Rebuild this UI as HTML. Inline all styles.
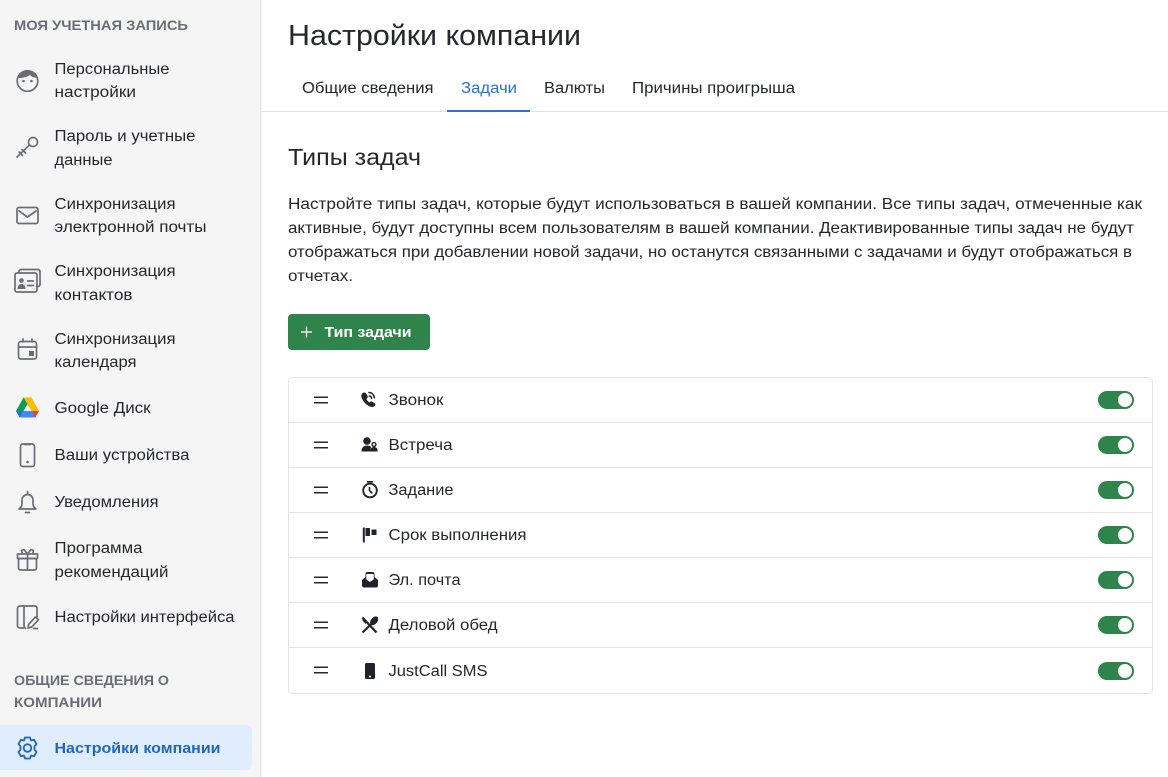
<!DOCTYPE html>
<html lang="ru"><head><meta charset="utf-8"><title>Настройки компании</title>
<style>
html,body{margin:0;padding:0;background:#fff;width:1168px;height:777px;overflow:hidden}
svg{display:block}
text{font-family:"Liberation Sans",sans-serif;fill:#25272c;font-size:15.3px}
.h{font-weight:700;font-size:14.2px;fill:#6a6d75}
.i{fill:none;stroke:#6a6d75;stroke-width:1.7;stroke-linecap:round;stroke-linejoin:round}
.d{fill:#21232c}
</style></head><body>
<svg width="1168" height="777" viewBox="0 0 1168 777" xmlns="http://www.w3.org/2000/svg">
<rect x="0" y="0" width="260" height="777" fill="#f5f5f5"/>
<rect x="260" y="0" width="1.5" height="777" fill="#e6e6e6"/>
<rect x="261" y="111" width="907" height="1" fill="#e0e0e0"/>

<!-- Sidebar text -->
<text class="h" x="14" y="30" textLength="174" lengthAdjust="spacingAndGlyphs">МОЯ УЧЕТНАЯ ЗАПИСЬ</text>
<text x="54.5" y="74" textLength="115" lengthAdjust="spacingAndGlyphs">Персональные</text>
<text x="54.5" y="97" textLength="81.500" lengthAdjust="spacingAndGlyphs">настройки</text>
<text x="54.5" y="141" textLength="141" lengthAdjust="spacingAndGlyphs">Пароль и учетные</text>
<text x="54.5" y="165" textLength="58" lengthAdjust="spacingAndGlyphs">данные</text>
<text x="54.500" y="209" textLength="121" lengthAdjust="spacingAndGlyphs">Синхронизация</text>
<text x="54.500" y="232" textLength="152" lengthAdjust="spacingAndGlyphs">электронной почты</text>
<text x="54.5" y="276" textLength="121" lengthAdjust="spacingAndGlyphs">Синхронизация</text>
<text x="54.5" y="300" textLength="78" lengthAdjust="spacingAndGlyphs">контактов</text>
<text x="54.5" y="344" textLength="121" lengthAdjust="spacingAndGlyphs">Синхронизация</text>
<text x="54.5" y="367" textLength="82" lengthAdjust="spacingAndGlyphs">календаря</text>
<text x="54.5" y="413" textLength="96" lengthAdjust="spacingAndGlyphs">Google Диск</text>
<text x="54.5" y="460" textLength="135" lengthAdjust="spacingAndGlyphs">Ваши устройства</text>
<text x="54.5" y="507" textLength="104" lengthAdjust="spacingAndGlyphs">Уведомления</text>
<text x="54.5" y="553" textLength="88" lengthAdjust="spacingAndGlyphs">Программа</text>
<text x="54.5" y="577" textLength="114" lengthAdjust="spacingAndGlyphs">рекомендаций</text>
<text x="54.5" y="622" textLength="180" lengthAdjust="spacingAndGlyphs">Настройки интерфейса</text>
<text class="h" x="14" y="685" textLength="155" lengthAdjust="spacingAndGlyphs">ОБЩИЕ СВЕДЕНИЯ О</text>
<text class="h" x="14" y="707" textLength="88" lengthAdjust="spacingAndGlyphs">КОМПАНИИ</text>
<path d="M0 725H246a6 6 0 0 1 6 6V764a6 6 0 0 1-6 6H0Z" fill="#e0edff"/>
<text x="54.5" y="753" textLength="166" lengthAdjust="spacingAndGlyphs" style="font-weight:700;fill:#1f66c1;font-size:15.2px">Настройки компании</text>

<!-- Sidebar icons -->
<circle class="i" cx="27.500" cy="81" r="10.300"/>
<path d="M17.800 78C18.500 73.500 22 70.500 27.500 70.500S36.500 73.500 37.200 78C33.500 77.500 31.500 76.500 29.800 75C27.500 77 22.500 78 17.800 78Z" fill="#6a6d75"/>
<circle cx="23.500" cy="81" r="1.300" fill="#6a6d75"/><circle cx="31.500" cy="81" r="1.300" fill="#6a6d75"/>
<path class="i" d="M29.500 145 17 157M19 152l3.500 3.500M22 149.500l3.500 3.500"/><circle class="i" cx="33" cy="142" r="4.500"/>
<rect class="i" x="17" y="207.500" width="21" height="16" rx="2"/><path class="i" d="M19 211l8.500 6 8.500-6"/>
<path class="i" d="M19 272v-.500a2 2 0 0 1 2-2h17a2 2 0 0 1 2 2v13a2 2 0 0 1-2 2h-1.500"/>
<rect class="i" x="15" y="273" width="22" height="19" rx="2"/>
<circle cx="21.500" cy="280.500" r="2.300" fill="#6a6d75"/><path d="M17.500 289c0-3.500 2-5 4-5s4 1.500 4 5Z" fill="#6a6d75"/>
<path class="i" d="M27.500 281h6M27.500 285.500h6"/>
<rect class="i" x="18.500" y="341.500" width="18" height="17.500" rx="2.500"/><path class="i" d="M18.500 347h18M23 339v3M32 339v3"/><rect x="29" y="351" width="5" height="5" fill="#6a6d75"/>
<!-- Drive -->
<path d="M23.500 397.500H31.500L39 411H31.500Z" fill="#fbbc04"/>
<path d="M23.500 397.500 16 411l3.800 6.500L27.500 404Z" fill="#0f9d58"/>
<path d="M23.500 411H39l-3.800 6.500H19.800Z" fill="#4285f4"/>
<path d="M32.500 411H39l-3.800 6.500Z" fill="#ea4335"/>
<path d="M16 411h7l-3.200 6.500Z" fill="#1a73e8"/>
<rect class="i" x="20.500" y="444" width="14" height="22.500" rx="2.500"/><path class="i" d="M25 444.500h5"/><circle cx="27.500" cy="462" r="1.300" fill="#6a6d75"/>
<path class="i" d="M19 509c2-1.500 3-3 3-5.500V500a5.500 5.500 0 0 1 11 0v3.500c0 2.500 1 4 3 5.500ZM27.500 491.500v3M25.500 512.500h4"/>
<rect class="i" x="18.500" y="558.500" width="18" height="11.500" rx="2"/><path class="i" d="M17.500 554h20v4.500h-20ZM27.500 554v16M27.500 554l-3.500-4.500-2.500 1 1 3.500M27.500 554l3.500-4.500 2.500 1-1 3.500"/>
<path class="i" d="M37 617v-9a2 2 0 0 0-2-2H20a2.500 2.500 0 0 0-2.500 2.500v17a2.500 2.500 0 0 0 2.500 2.500h3.500M24 606.500l0 19.500 1.500 2.500M37.500 628.500h-4M28 628l.7-3.700 6.800-7.300 3 2.800-6.800 7.300Z"/>
<g fill="none" stroke="#1f66c1" stroke-width="1.800" stroke-linejoin="round"><circle cx="27.500" cy="748" r="3.800"/><path d="M25 737.500h5l1 3 3-.8 2.500 4.300-2 2.300 0 3.400 2 2.300-2.500 4.300-3-.8-1 3h-5l-1-3-3 .8-2.500-4.300 2-2.300 0-3.400-2-2.300 2.500-4.300 3 .8Z"/></g>

<!-- Header -->
<text x="288" y="45" textLength="293" lengthAdjust="spacingAndGlyphs" style="font-size:28.5px">Настройки компании</text>
<text x="302" y="93" textLength="131.500" lengthAdjust="spacingAndGlyphs">Общие сведения</text>
<text x="461" y="93" textLength="56" lengthAdjust="spacingAndGlyphs" style="fill:#2b6fd1">Задачи</text>
<text x="544" y="93" textLength="61" lengthAdjust="spacingAndGlyphs">Валюты</text>
<text x="632" y="93" textLength="163" lengthAdjust="spacingAndGlyphs">Причины проигрыша</text>
<rect x="447" y="110" width="83" height="2" fill="#2b73d9"/>

<!-- Body -->
<text x="288" y="165" textLength="133" lengthAdjust="spacingAndGlyphs" style="font-size:23.5px">Типы задач</text>
<text x="288" y="209" textLength="854" lengthAdjust="spacingAndGlyphs">Настройте типы задач, которые будут использоваться в вашей компании. Все типы задач, отмеченные как</text>
<text x="288" y="233" textLength="846" lengthAdjust="spacingAndGlyphs">активные, будут доступны всем пользователям в вашей компании. Деактивированные типы задач не будут</text>
<text x="288" y="257" textLength="844" lengthAdjust="spacingAndGlyphs">отображаться при добавлении новой задачи, но останутся связанными с задачами и будут отображаться в</text>
<text x="288" y="281" textLength="65" lengthAdjust="spacingAndGlyphs">отчетах.</text>

<rect x="288" y="314" width="142" height="36" rx="4" fill="#2e844a"/>
<path d="M301 332h11M306.500 326.500v11" stroke="#fff" stroke-width="1.300"/>
<text x="324.500" y="337" textLength="87" lengthAdjust="spacingAndGlyphs" style="font-weight:700;fill:#fff;font-size:15.2px">Тип задачи</text>

<!-- Card -->
<rect x="288.500" y="377.500" width="864" height="316" rx="4" fill="#fff" stroke="#e4e4e4"/>
<g fill="#e4e4e4"><rect x="289" y="422" width="863" height="1"/><rect x="289" y="467" width="863" height="1"/><rect x="289" y="512" width="863" height="1"/><rect x="289" y="557" width="863" height="1"/><rect x="289" y="602" width="863" height="1"/><rect x="289" y="647" width="863" height="1"/></g>

<g fill="#26282d">
<rect x="314" y="396.500" width="14" height="1.500"/><rect x="314" y="402" width="14" height="1.500"/>
<rect x="314" y="441.500" width="14" height="1.500"/><rect x="314" y="447" width="14" height="1.500"/>
<rect x="314" y="486.500" width="14" height="1.500"/><rect x="314" y="492" width="14" height="1.500"/>
<rect x="314" y="531.500" width="14" height="1.500"/><rect x="314" y="537" width="14" height="1.500"/>
<rect x="314" y="576.500" width="14" height="1.500"/><rect x="314" y="582" width="14" height="1.500"/>
<rect x="314" y="621.500" width="14" height="1.500"/><rect x="314" y="627" width="14" height="1.500"/>
<rect x="314" y="666.500" width="14" height="1.500"/><rect x="314" y="672" width="14" height="1.500"/>
</g>

<text x="388.500" y="405" textLength="55" lengthAdjust="spacingAndGlyphs">Звонок</text>
<text x="388.500" y="450" textLength="64" lengthAdjust="spacingAndGlyphs">Встреча</text>
<text x="388.500" y="495" textLength="65" lengthAdjust="spacingAndGlyphs">Задание</text>
<text x="388.500" y="540" textLength="138" lengthAdjust="spacingAndGlyphs">Срок выполнения</text>
<text x="388.500" y="585" textLength="72" lengthAdjust="spacingAndGlyphs">Эл. почта</text>
<text x="388.500" y="630" textLength="109" lengthAdjust="spacingAndGlyphs">Деловой обед</text>
<text x="388.500" y="676" textLength="99" lengthAdjust="spacingAndGlyphs">JustCall SMS</text>

<!-- Row icons -->
<path class="d" d="M364 392.500c-2 .5-3 2.300-2.500 4.500 1 4 5.200 8.700 9.300 9.800 1.900.5 3.600 0 4.300-1.400.4-.8.200-1.500-.4-2l-2.500-1.800c-.7-.4-1.400-.3-1.900.2l-.8.700c-1.300-.8-2.500-2.100-3-3.500l.8-.9c.5-.6.600-1.300.3-2l-1.500-2.600c-.5-.8-1.300-1.100-2.100-1Z"/>
<path d="M369 392.500c3 .2 5 2.300 5.200 5.200M369.300 396c1.300.1 2.100 1 2.200 2.200" fill="none" stroke="#21232c" stroke-width="1.600" stroke-linecap="round"/>
<circle class="d" cx="367" cy="441" r="3.800"/><path class="d" d="M361.500 451.500c0-4 2.300-6 5.500-6 1.900 0 3.300.6 4.300 1.700l-.8 1.500v2.800Z"/>
<circle cx="374" cy="444.500" r="1.900" fill="none" stroke="#21232c" stroke-width="1.400"/><path class="d" d="M370.500 451.500v-1.500c0-1.800 1.500-3 3.500-3s3.500 1.200 3.500 3v1.500Z"/>
<circle cx="370" cy="490.500" r="6.800" fill="none" stroke="#21232c" stroke-width="1.900"/><path d="M367 481.800h6M370 481.800v2M369.500 487v3.500l2.800 2.800" fill="none" stroke="#21232c" stroke-width="1.600"/>
<rect class="d" x="362.800" y="527.500" width="2" height="15"/><path class="d" d="M365.500 528h4.500v8h-4.500ZM371.500 529.500h5v5.500h-5Z"/>
<path class="d" d="M362 580l3.500-3v-3.500a2 2 0 0 1 2-1.500h5a2 2 0 0 1 2 1.500v3.500l3.500 3v5.500a2 2 0 0 1-2 2H364a2 2 0 0 1-2-2Z"/>
<path d="M366.300 574h7.400v5.500l-3.700 2.500-3.700-2.500Z" fill="#fff"/>
<path d="M362.500 617.500 376.500 632.500" stroke="#21232c" stroke-width="2.200"/>
<path class="d" d="M362.500 616.500l5 5-2 2.500-3-3.500Z"/>
<ellipse class="d" cx="374.200" cy="620.800" rx="3.300" ry="5" transform="rotate(40 374.200 620.800)"/>
<path d="M372.500 623 362.500 632.500" stroke="#21232c" stroke-width="2.200"/>
<rect class="d" x="365" y="663" width="10" height="16" rx="1.500"/>
<circle cx="370" cy="676.500" r="1" fill="#fff"/>

<!-- Toggles -->
<g fill="#2e844a">
<rect x="1098" y="391" width="36" height="18" rx="9"/><rect x="1098" y="436" width="36" height="18" rx="9"/><rect x="1098" y="481" width="36" height="18" rx="9"/><rect x="1098" y="526" width="36" height="18" rx="9"/><rect x="1098" y="571" width="36" height="18" rx="9"/><rect x="1098" y="616" width="36" height="18" rx="9"/><rect x="1098" y="662" width="36" height="18" rx="9"/>
</g>
<g fill="#fff">
<circle cx="1125" cy="400" r="7"/><circle cx="1125" cy="445" r="7"/><circle cx="1125" cy="490" r="7"/><circle cx="1125" cy="535" r="7"/><circle cx="1125" cy="580" r="7"/><circle cx="1125" cy="625" r="7"/><circle cx="1125" cy="671" r="7"/>
</g>
</svg>
</body></html>
